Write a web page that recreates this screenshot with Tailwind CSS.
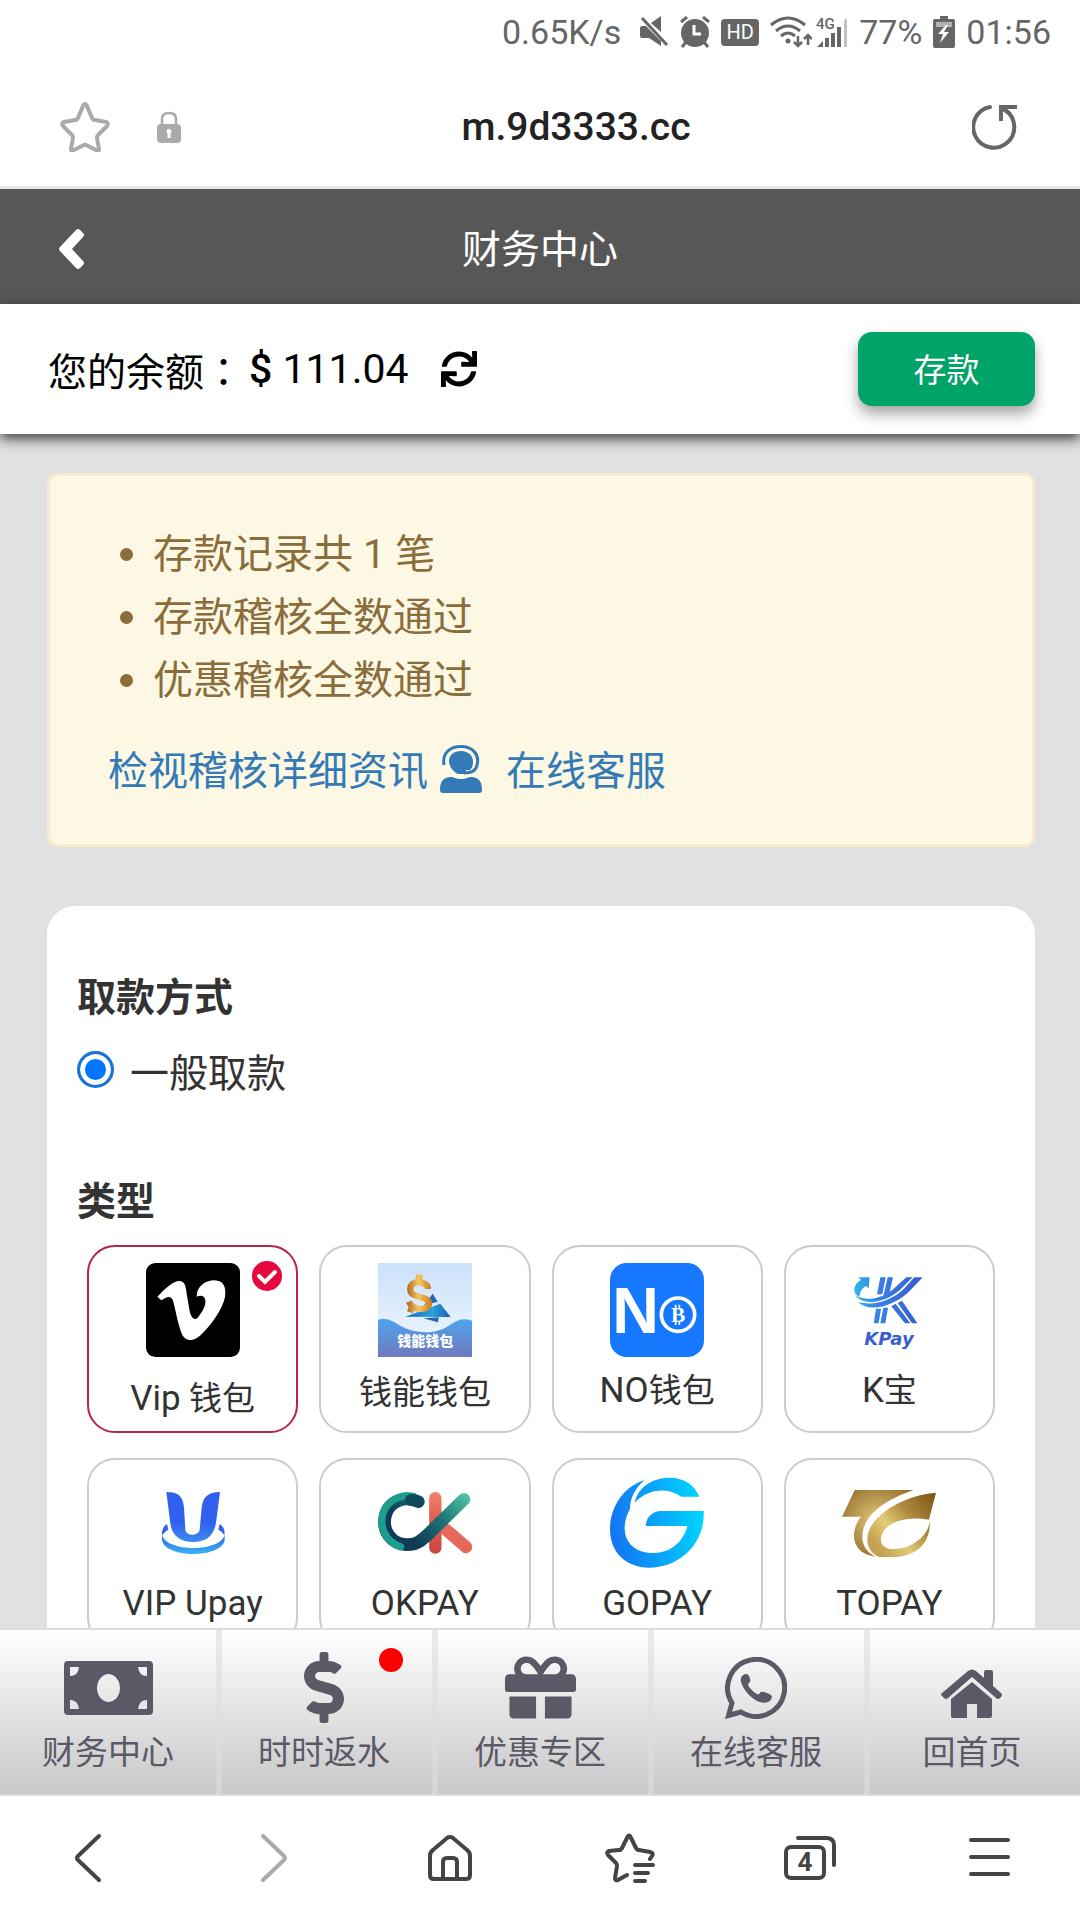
<!DOCTYPE html>
<html lang="zh-CN">
<head>
  <meta charset="UTF-8" />
  <meta name="viewport" content="width=device-width, initial-scale=1.0" />
  <title>财务中心</title>
  <script src="https://cdn.jsdelivr.net/npm/@tailwindcss/browser@4"></script>
</head>
<body class="h-screen flex flex-col overflow-hidden bg-white text-[#333] font-[Roboto,'Noto_Sans_CJK_SC',sans-serif]">

  <!-- Phone status bar -->
  <div class="h-16 shrink-0 flex items-center justify-end gap-[11px] pr-[29px] text-[34px] leading-none text-[#666]">
    <span class="mr-2">0.65K/s</span>
    <svg class="w-[29px] h-8" viewBox="0 0 29 32" fill="currentColor"><path d="M0 12q0-2 2-2h4l15 15v5L9 22H2q-2 0-2-2zM11 7l10-7v16z"/><path d="M2 2l25 27" stroke="currentColor" stroke-width="3"/></svg>
    <svg class="w-[30px] h-8" viewBox="0 0 30 32"><circle cx="15" cy="17" r="14" fill="currentColor"/><path d="M1 6l6-5M29 6l-6-5M6 26l-4 5M24 26l4 5" stroke="currentColor" stroke-width="3"/><path d="M14 9v9h7" fill="none" stroke="#fff" stroke-width="3"/></svg>
    <span class="w-[38px] h-[27px] rounded-sm bg-[#666] text-white text-[20px] leading-[27px] text-center">HD</span>
    <div class="flex items-center gap-1">
      <svg class="w-[42px] h-8" viewBox="0 0 42 32" fill="none" stroke="currentColor" stroke-width="3"><path d="M1 9Q18-5 35 9M6 15q12-10 24 0M11 20q7-6 14 0"/><circle cx="18" cy="25" r="2.500" fill="currentColor" stroke="none"/><path d="M28 20v10M24 26l4 4 4-4M38 29V19M34 23l4-4 4 4" stroke-width="2.500"/></svg>
      <svg class="w-8 h-8" viewBox="0 0 32 32" fill="currentColor"><text x="0" y="13" font-size="15" font-weight="500">4G</text><path d="M1 31l6-6v6zM9 22h4v9H9zM15 17h4v14h-4zM21 11h4v20h-4z"/><path d="M28 4l3-2v29h-3z" opacity=".4"/></svg>
    </div>
    <span>77%</span>
    <svg class="w-[22px] h-8" viewBox="0 0 22 32"><path d="M7 0h8v3h5q2 0 2 2v25q0 2-2 2H2q-2 0-2-2V5q0-2 2-2h5z" fill="currentColor"/><path d="M3 6h16v5H3z" fill="#fff" opacity=".5"/><path d="M13 9l-8 9h5l-3 9 9-11h-5l4-7z" fill="#fff"/></svg>
    <span>01:56</span>
  </div>

  <!-- Address bar -->
  <div class="h-[125px] shrink-0 flex items-center justify-between pt-1 pl-[60px] pr-[62px] border-b-[3px] border-[#e5e5e5]">
    <div class="flex items-center gap-[47px] w-[120px]">
      <button aria-label="收藏"><svg class="block w-[50px] h-[50px]" viewBox="0 0 50 50" fill="none" stroke="#aaa" stroke-width="4" stroke-linejoin="round"><path d="M23 4q2-4 4 0l5 12q1 2 3 2l11 2q3 1 1 4l-9 9q-1 1-1 3l2 11q0 3-3 1l-10-5q-1-1-2 0l-10 5q-3 2-3-1l2-11q0-2-1-3L3 24q-2-3 1-4l11-2q2 0 3-2z"/></svg></button>
      <svg class="w-6 h-8 shrink-0" viewBox="0 0 24 32"><path d="M5 15V8q0-6 7-6t7 6v7" fill="none" stroke="#aaa" stroke-width="2.500"/><rect y="13" width="24" height="19" rx="4" fill="#aaa"/><path d="M12 18a2.500 2.500 0 0 1 1.500 4.500V27h-3v-4.500A2.500 2.500 0 0 1 12 18z" fill="#fff"/></svg>
    </div>
    <span class="text-[39px] leading-none font-medium text-[#222] pl-[74px]">m.9d3333.cc</span>
    <div class="flex justify-end w-[120px]">
      <button aria-label="刷新"><svg class="block w-[46px] h-[46px]" viewBox="0 0 46 46" fill="none" stroke="#666" stroke-width="4"><path d="M18 3a20.500 20.500 0 1 0 15 3" stroke-linecap="round"/><path d="M45 3H29v14M29 3l8 6"/></svg></button>
    </div>
  </div>

  <!-- Page header -->
  <header class="h-[115px] shrink-0 grid grid-cols-3 items-center pt-1 px-[58px] bg-[#575757] text-white">
    <a href="#" aria-label="返回" class="justify-self-start"><svg class="block w-7 h-10" viewBox="0 0 28 40" fill="currentColor"><path d="M18 1q2-2 4 0l3 3q2 2 0 4L14 20l11 12q2 2 0 4l-3 3q-2 2-4 0L2 22q-2-2 0-4z"/></svg></a>
    <h1 class="pt-1 text-[39px] leading-none text-center whitespace-nowrap">财务中心</h1>
  </header>

  <!-- Balance -->
  <div class="relative z-10 h-[130px] shrink-0 flex items-center justify-between pl-12 pr-[45px] bg-white text-black shadow-[0_5px_12px_rgba(0,0,0,0.7)]">
    <div class="flex items-center text-[39px] leading-[60px]">
      <span class="pt-1">您的余额<span lang="zh-TW" class="font-['Noto_Sans_CJK_TC',sans-serif]">：</span></span>
      <span class="ml-1.5 text-[41px]"><span class="font-medium">$</span> 111.04</span>
      <button aria-label="更新余额" class="ml-8"><svg class="block w-9 h-9" viewBox="0 0 512 512" fill="currentColor"><path d="M440.650 12.570l4 82.770A247.160 247.160 0 0 0 255.830 8C134.730 8 33.910 94.920 12.290 209.820A12 12 0 0 0 24.090 224h49.050a12 12 0 0 0 11.670-9.260 175.910 175.910 0 0 1 317-56.940l-101.460-4.860a12 12 0 0 0-12.570 12v47.410a12 12 0 0 0 12 12H500a12 12 0 0 0 12-12V12a12 12 0 0 0-12-12h-47.370a12 12 0 0 0-11.980 12.570zM255.830 432a175.610 175.610 0 0 1-146-77.800l101.800 4.870a12 12 0 0 0 12.570-12v-47.400a12 12 0 0 0-12-12H12a12 12 0 0 0-12 12V500a12 12 0 0 0 12 12h47.350a12 12 0 0 0 12-12.600l-4.150-82.570A247.170 247.170 0 0 0 255.830 504c121.110 0 221.930-86.920 243.550-201.820a12 12 0 0 0-11.800-14.180h-49.050a12 12 0 0 0-11.670 9.260A175.860 175.860 0 0 1 255.830 432z"/></svg></button>
    </div>
    <button class="w-[177px] h-[74px] pt-0.5 rounded-[14px] bg-[#00a368] text-white text-[33px] leading-none shadow-[0_8px_14px_rgba(0,0,0,0.35)]">存款</button>
  </div>

  <main class="flex-1 min-h-0 overflow-hidden bg-[#e1e1e1] pl-[47px] pr-[45px] pt-[39px]">
    <section class="rounded-[10px] border-[3px] border-[#faebcc] bg-[#fcf8e3] px-[58px] pt-[47px] pb-[41px] text-[40px] leading-[63px] text-[#8a6d3b]">
      <ul>
        <li class="flex items-center gap-5 pl-3"><i class="w-[13px] h-[13px] rounded-full bg-[#8a6d3b]"></i>存款记录共 1 笔</li>
        <li class="flex items-center gap-5 pl-3"><i class="w-[13px] h-[13px] rounded-full bg-[#8a6d3b]"></i>存款稽核全数通过</li>
        <li class="flex items-center gap-5 pl-3"><i class="w-[13px] h-[13px] rounded-full bg-[#8a6d3b]"></i>优惠稽核全数通过</li>
      </ul>
      <div class="flex items-center mt-7 text-[#337ab7]">
        <a href="#">检视稽核详细资讯</a>
        <a href="#" class="flex items-center ml-3">
          <svg class="w-[42px] h-12 mr-6 mb-1.5" viewBox="0 0 42 48" fill="currentColor"><path d="M21 6c8 0 12 5 12 11 0 4-1 6-3 8h-9q-4 0-5 3c-4-3-7-7-7-12C9 10 14 6 21 6z"/><path d="M4 20C2 8 10 1.500 21 1.500S40 9 37 20c-1 6-6 8-13 8" fill="none" stroke="currentColor" stroke-width="3"/><rect x="16" y="24" width="10" height="5" rx="2.500"/><path d="M0 45c0-8 3-13 11-13 3 0 4 2 10 2s7-2 10-2c8 0 11 5 11 13q0 3-3 3H3q-3 0-3-3z"/></svg>
          在线客服
        </a>
      </div>
    </section>

    <section class="mt-[59px] rounded-t-[28px] bg-white px-[30px] pt-16 pb-10">
      <h2 class="text-[39px] leading-[56px] font-bold">取款方式</h2>
      <label class="mt-5 flex items-center gap-4 text-[39px] leading-[56px]">
        <input type="radio" name="method" checked class="appearance-none shrink-0 w-[37px] h-[37px] mb-2.5 rounded-full border-[3px] border-[#1a73d9] bg-[#0075ff] shadow-[inset_0_0_0_5px_#fff]">
        一般取款
      </label>
      <h2 class="mt-[72px] text-[39px] leading-[56px] font-bold">类型</h2>

      <div class="mt-[15px] px-2.5 grid grid-cols-4 gap-x-[21px] gap-y-[25px] text-[33px] leading-[48px] text-center">
        <label class="relative h-[188px] rounded-[28px] border-2 border-[#b5254c] pt-4 flex flex-col items-center">
          <input type="radio" name="wallet" checked class="sr-only">
          <svg class="w-[94px] h-[94px]" viewBox="228 98 282 282"><rect x="228" y="98" width="282" height="282" rx="28"/><path d="M262 199C290 170 312 150 330 152c15 2 18 18 20 38l9 53c5 22 16 28 24 19 14-16 25-36 23-52-2-14-14-16-26-11 0-30 25-49 53-49 28 1 36 20 32 50-7 36-43 88-75 116-20 17-40 17-52 0-16-35-20-78-30-108-8-13-19-8-34 2z" fill="#fff"/></svg>
          <svg class="absolute right-3.5 top-3.5 w-[30px] h-[30px]" viewBox="0 0 30 30"><circle cx="15" cy="15" r="15" fill="#e6073f"/><path d="M7 15l6 6L23 11" fill="none" stroke="#fff" stroke-width="4" stroke-linecap="round"/></svg>
          <span class="mt-[18px]"><span class="text-[35px]">Vip</span> 钱包</span>
        </label>

        <label class="h-[188px] rounded-[28px] border-2 border-[#ccc] pt-4 flex flex-col items-center">
          <input type="radio" name="wallet" class="sr-only">
          <svg class="w-[94px] h-[94px]" viewBox="924 98 282 282">
            <defs>
              <linearGradient id="sky" x2="0" y2="1"><stop stop-color="#cbe1fb"/><stop offset="1" stop-color="#f1f8ff"/></linearGradient>
              <linearGradient id="sea" x2="0" y2="1"><stop stop-color="#4fa4ee"/><stop offset="1" stop-color="#7079bd"/></linearGradient>
              <linearGradient id="coin" gradientUnits="userSpaceOnUse" x1="1006" y1="0" x2="1086" y2="0"><stop stop-color="#a65c14"/><stop offset=".5" stop-color="#f8c664"/><stop offset="1" stop-color="#c9791c"/></linearGradient>
              <linearGradient id="sail"><stop stop-color="#0d6fc0"/><stop offset=".6" stop-color="#28a2d8"/><stop offset="1" stop-color="#1d5bb0"/></linearGradient>
            </defs>
            <path d="M924 98h282v282H924z" fill="url(#sky)"/>
            <path d="M924 268q25-8 50 8c50 35 120 43 170 5 22-15 40-18 62-10v109H924z" fill="url(#sea)"/>
            <path d="M1062 225l26-35 15 24zM1060 264l46-3-2 15z" fill="#2464b4"/>
            <path d="M1006 259l105-39 31 40z" fill="url(#sail)"/>
            <path d="M1074 176c0-24-54-32-53 2 0 28 57 16 56 42-2 22-50 22-60-6M1049 132l-3 16M1028 226l-8 20" fill="none" stroke="url(#coin)" stroke-width="19"/>
            <text x="1066" y="347" font-size="42" font-weight="900" text-anchor="middle" fill="#fff">钱能钱包</text>
          </svg>
          <span class="mt-3">钱能钱包</span>
        </label>

        <label class="h-[188px] rounded-[28px] border-2 border-[#ccc] pt-4 flex flex-col items-center">
          <input type="radio" name="wallet" class="sr-only">
          <svg class="w-[94px] h-[94px]" viewBox="210 98 282 282"><rect x="210" y="98" width="282" height="282" rx="50" fill="#1677ff"/><text x="217" y="309" font-size="194" font-weight="700" fill="#fff" font-family="Liberation Sans">N</text><circle cx="414" cy="253" r="50" fill="#1677ff" stroke="#fff" stroke-width="11"/><text x="414" y="276" font-size="64" font-weight="700" text-anchor="middle" fill="#fff" font-family="Liberation Serif">B</text><path d="M407 223v10M418 223v10M407 274v10M418 274v10" stroke="#fff" stroke-width="5"/></svg>
          <span class="mt-2.5"><span class="text-[35px]">NO</span>钱包</span>
        </label>

        <label class="h-[188px] rounded-[28px] border-2 border-[#ccc] pt-4 flex flex-col items-center">
          <input type="radio" name="wallet" class="sr-only">
          <svg class="w-[94px] h-[94px]" viewBox="906 98 282 282">
            <defs><linearGradient id="kp" gradientUnits="userSpaceOnUse" x1="944" y1="0" x2="1148" y2="0"><stop stop-color="#2cb4ea"/><stop offset=".35" stop-color="#3a80e6"/><stop offset="1" stop-color="#345bd2"/></linearGradient></defs>
            <g fill="url(#kp)">
              <path d="M956 141h33l-3 33-8-7q-17 8-20 32-16-7-15-24 2-16 20-26z"/>
              <path d="M1021 141h16l-10 51h-16zM1043 141h16l-11 48-18 8zM1008 235h15l-7 44h-15zM1030 232h14l-8 47h-15zM1054 228l13-8 44 59h-16zM1073 218l13-7 46 68h-16z"/>
              <path d="M944 195c35 19 82 11 117-20l38-34h19l-36 36c-48 43-110 50-138 18z"/>
              <path d="M954 216c57 12 107-10 140-43l29-32h25l-39 41c-48 46-119 66-155 34z"/>
            </g>
            <text x="1047" y="345" font-size="54" font-weight="700" font-style="italic" text-anchor="middle" fill="#3b5fd0" font-family="DejaVu Sans">KPay</text>
          </svg>
          <span class="mt-2.5"><span class="text-[35px]">K</span>宝</span>
        </label>

        <label class="h-[188px] rounded-[28px] border-2 border-[#ccc] pt-4 flex flex-col items-center">
          <input type="radio" name="wallet" class="sr-only">
          <svg class="w-[94px] h-[94px]" viewBox="228 108 282 282">
            <defs><linearGradient id="up" x2="0" y2="1"><stop offset=".6" stop-color="#2f60ee"/><stop offset="1" stop-color="#3a8bf2"/></linearGradient><linearGradient id="ring" x2="0" y2="1"><stop stop-color="#2f60ee"/><stop offset="1" stop-color="#38b5f2"/></linearGradient></defs>
            <path d="M291 252c-12 8-17 20-14 34 3-6 9-12 18-17zM449 252c12 8 17 20 14 34-3-6-9-12-18-17z" fill="#2f60ee"/>
            <path d="M276 283c8 55 180 55 188 0v17c-9 56-179 56-188 0z" fill="url(#ring)"/>
            <path d="M289 156c37 0 50 13 53 47l4 66c2 20 40 20 43 0l6-66c4-32 18-46 55-47l-12 92c-6 38-28 58-68 58-39 0-64-18-69-56z" fill="url(#up)"/>
          </svg>
          <span class="mt-2.5 text-[35px]">VIP Upay</span>
        </label>

        <label class="h-[188px] rounded-[28px] border-2 border-[#ccc] pt-4 flex flex-col items-center">
          <input type="radio" name="wallet" class="sr-only">
          <svg class="w-[94px] h-[94px]" viewBox="924 108 282 282" fill="none" stroke-linecap="round">
            <defs>
              <linearGradient id="okc" gradientUnits="userSpaceOnUse" x1="1040" y1="310" x2="1195" y2="165"><stop stop-color="#0e3c56"/><stop offset=".5" stop-color="#1f7378"/><stop offset="1" stop-color="#52c6a2"/></linearGradient>
              <linearGradient id="okr" gradientUnits="userSpaceOnUse" x1="1096" y1="160" x2="1096" y2="340"><stop stop-color="#f0806a"/><stop offset=".4" stop-color="#e2604f"/><stop offset="1" stop-color="#cb4640"/></linearGradient>
            </defs>
            <path d="M1096 174.500L1096.010 323" stroke="url(#okr)" stroke-width="37"/>
            <path d="M1128 269l60 52" stroke="#e5695a" stroke-width="37"/>
            <path d="M1045 185c-39-20-87-2-98 39-14 48 18 88 63 90 30 1 43-12 63-30L1182 178" stroke="url(#okc)" stroke-width="38"/>
            <path d="M1030 169c-48-7-84 19-93 58-8 42 15 80 55 93" stroke="#1b9f8c" stroke-width="22"/>
            <path d="M1045 185q-12-5-22-5" stroke="#0f4a5c" stroke-width="36"/>
          </svg>
          <span class="mt-2.5 text-[35px]">OKPAY</span>
        </label>

        <label class="h-[188px] rounded-[28px] border-2 border-[#ccc] pt-4 flex flex-col items-center">
          <input type="radio" name="wallet" class="sr-only">
          <svg class="w-[94px] h-[94px]" viewBox="210 108 282 282">
            <defs><linearGradient id="go" gradientUnits="userSpaceOnUse" x1="210" y1="260" x2="480" y2="220"><stop stop-color="#1474f2"/><stop offset="1" stop-color="#00d2ff"/></linearGradient></defs>
            <g fill="url(#go)"><path d="M314 120c-62 19-104 80-104 148 0 69 48 115 117 115 94 0 169-74 164-170H360c-24 3-41 18-43 45h125c-12 47-49 81-103 81-53 0-87-32-85-79 1-20 7-37 16-53 0-34 16-63 44-87z"/><path d="M284 188c10-46 52-74 103-75 45-1 77 23 91 57h-54c-45-31-103-21-140 18z"/></g>
          </svg>
          <span class="mt-2.5 text-[35px]">GOPAY</span>
        </label>

        <label class="h-[188px] rounded-[28px] border-2 border-[#ccc] pt-4 flex flex-col items-center">
          <input type="radio" name="wallet" class="sr-only">
          <svg class="w-[94px] h-[94px]" viewBox="906 108 282 282">
            <defs>
              <radialGradient id="gold1" cx=".5" cy=".45" r=".6"><stop stop-color="#e2cb78"/><stop offset="1" stop-color="#977030"/></radialGradient>
              <linearGradient id="gold2" x1=".1" y1=".8" x2="1" y2=".1"><stop stop-color="#c4a150"/><stop offset=".3" stop-color="#e2cb78"/><stop offset=".6" stop-color="#b08a3e"/><stop offset="1" stop-color="#805918"/></linearGradient>
            </defs>
            <path d="M944 150h177c-95 32-154 82-154 140 0 26 13 45 38 60-46-7-64-34-63-66 1-20 9-38 20-54h-56z" fill="url(#gold1)"/>
            <path d="M1188 158c-95 7-204 69-206 138 0 29 13 45 36 55h47c68-4 106-43 105-107-8 48-56 82-108 83-27 0-42-12-39-34 6-39 62-67 144-54z" fill="url(#gold2)"/>
          </svg>
          <span class="mt-2.5 text-[35px]">TOPAY</span>
        </label>
      </div>
    </section>
  </main>

  <!-- Site tab bar -->
  <nav class="shrink-0 grid grid-cols-5 border-y-2 border-[#dcdcdc] bg-linear-to-b from-white to-[#c8c8ca] text-[#5b5966] text-[33px] leading-[48px] text-center">
    <a href="#" class="pt-[22px] pb-[17px]">
      <span class="h-[71px] flex items-center justify-center"><svg class="w-[89px] h-[54px]" viewBox="0 0 89 54" fill="currentColor"><path fill-rule="evenodd" d="M4 0h81q4 0 4 4v46q0 4-4 4H4q-4 0-4-4V4q0-4 4-4zM6 6v9q8 0 9-9zM83 6h-9q1 9 9 9zM6 48h9q-1-9-9-9zM83 48v-9q-8 0-9 9zM44.500 13a11.500 14 0 1 0 .010 0z"/></svg></span>
      <span class="block mt-1.5">财务中心</span>
    </a>
    <a href="#" class="relative pt-[22px] pb-[17px] pr-1.5 border-l-[6px] border-[#dedede]/60">
      <span class="h-[71px] flex items-center justify-center"><svg class="w-10 h-[71px]" viewBox="0 0 288 512" fill="currentColor"><path d="M209.200 233.400l-108-31.600C88.700 198.200 80 186.500 80 173.500c0-16.300 13.200-29.500 29.500-29.500h66.300c12.200 0 24.200 3.700 34.200 10.500 6.100 4.100 14.300 3.100 19.500-2l34.800-34c7.100-6.900 6.100-18.400-1.800-24.500C238 74.800 207.400 64.100 176 64V16c0-8.800-7.200-16-16-16h-32c-8.800 0-16 7.200-16 16v48h-2.500C45.800 64-5.400 118.700.5 183.600c4.200 46.100 39.400 83.600 83.800 96.600l102.500 30c12.500 3.700 21.200 15.300 21.200 28.300 0 16.300-13.200 29.500-29.500 29.500h-66.300C100 368 88 364.300 78 357.500c-6.100-4.100-14.300-3.100-19.500 2l-34.800 34c-7.100 6.900-6.100 18.400 1.800 24.500 24.500 19.200 55.100 29.900 86.500 30v48c0 8.800 7.200 16 16 16h32c8.800 0 16-7.200 16-16v-48.200c46.600-.9 90.300-28.600 105.700-72.700 21.500-61.600-14.600-124.800-72.500-141.700z"/></svg></span>
      <span class="block mt-1.5">时时返水</span>
      <i class="absolute right-[29px] top-[18px] w-6 h-6 rounded-full bg-[#ff0000]"></i>
    </a>
    <a href="#" class="pt-[22px] pb-[17px] pr-1.5 border-l-[6px] border-[#dedede]/60">
      <span class="h-[71px] flex items-center justify-center"><svg class="w-[71px] h-[71px]" viewBox="0 0 512 512" fill="currentColor"><path d="M32 448c0 17.700 14.300 32 32 32h160V320H32v128zm256 32h160c17.700 0 32-14.300 32-32V320H288v160zm192-320h-42.100c6.200-12.100 10.100-25.500 10.100-40 0-48.500-39.500-88-88-88-41.600 0-68.500 21.300-103 68.300-34.500-47-61.400-68.300-103-68.300-48.500 0-88 39.500-88 88 0 14.500 3.800 27.900 10.100 40H32c-17.700 0-32 14.300-32 32v80c0 8.800 7.200 16 16 16h480c8.800 0 16-7.200 16-16v-80c0-17.700-14.300-32-32-32zm-326.100 0c-22.100 0-40-17.900-40-40s17.900-40 40-40c19.900 0 34.600 3.300 86.100 80h-86.100zm206.100 0h-86.100c51.400-76.500 65.700-80 86.100-80 22.100 0 40 17.900 40 40s-17.900 40-40 40z"/></svg></span>
      <span class="block mt-1.5">优惠专区</span>
    </a>
    <a href="#" class="pt-[22px] pb-[17px] pr-1.5 border-l-[6px] border-[#dedede]/60">
      <span class="h-[71px] flex items-center justify-center"><svg class="w-[62px] h-[62px]" viewBox="0 0 62 62"><path d="M7 46A28.500 28.500 0 1 1 16 55L3.500 58.500z" fill="none" stroke="currentColor" stroke-width="5"/><path d="M21 17q3 0 4 5 1 3-1 4-2 2 1 5 3 4 7 6 2 1 3-1 1-2 4-1 5 1 8 4 0 4-4 6-5 2-11-1-9-5-14-14-4-7-1-11 2-2 4-2z" fill="currentColor"/></svg></span>
      <span class="block mt-1.5">在线客服</span>
    </a>
    <a href="#" class="pt-[22px] pb-[17px] pr-1.5 border-l-[6px] border-[#dedede]/60">
      <span class="h-[71px] flex items-center justify-center"><svg class="w-[62px] h-[62px]" viewBox="0 0 62 62" fill="currentColor"><path d="M31 25l20 17v17q0 2-2 2H36V47H26v14H12q-2 0-2-2V42z"/><path d="M27 14q4-3 8 0l8 7v-6q0-2 2-2h5q2 0 2 2v14l8 7q2 2 0 4l-1 1q-2 2-4 0L31 20 7 41q-2 2-4 0l-2-2q-2-2 0-3z"/></svg></span>
      <span class="block mt-1.5">回首页</span>
    </a>
  </nav>

  <!-- Browser toolbar -->
  <div class="h-[124px] shrink-0 grid grid-cols-6 items-center justify-items-center bg-white text-[#444]">
    <button aria-label="后退"><svg class="block w-[50px] h-[50px]" viewBox="0 0 50 50" fill="none" stroke="currentColor" stroke-width="4" stroke-linecap="round"><path d="M34 3L13 23q-2 2 0 4l21 20"/></svg></button>
    <button aria-label="前进"><svg class="block w-[50px] h-[50px]" viewBox="0 0 50 50" fill="none" stroke="#aaa" stroke-width="4" stroke-linecap="round"><path d="M18 3l21 20q2 2 0 4L18 47"/></svg></button>
    <button aria-label="主页"><svg class="block w-[50px] h-[50px]" viewBox="0 0 50 50" fill="none" stroke="currentColor" stroke-width="4"><path d="M5 23q0-4 3-6L22 5q3-2 6 0l14 12q3 2 3 6v19q0 4-4 4H9q-4 0-4-4zM18 46V29q0-4 4-4h6q4 0 4 4v17"/></svg></button>
    <button aria-label="书签"><svg class="block w-[50px] h-[50px]" viewBox="0 0 50 50" fill="none" stroke="currentColor" stroke-width="4" stroke-linecap="round" stroke-linejoin="round"><path d="M22 42l-9 5q-3 1-3-2l2-12q0-2-1-3l-8-8q-2-3 1-4l10-1q2 0 3-2l5-10q2-5 4 0l5 10q1 2 3 2l11 2q4 1 2 4l-2 3M30 32h18M30 40h13M30 48h10"/></svg></button>
    <button aria-label="标签页"><svg class="block w-[54px] h-[50px]" viewBox="0 0 54 50" fill="none" stroke="currentColor" stroke-width="4" stroke-linecap="round"><rect x="3" y="14" width="38" height="31" rx="5"/><path d="M15 5h28q8 0 8 7v20"/><text x="22" y="38" font-size="26" font-weight="700" text-anchor="middle" fill="currentColor" stroke="none">4</text></svg></button>
    <button aria-label="菜单"><svg class="block w-[50px] h-[50px]" viewBox="0 0 50 50" fill="none" stroke="currentColor" stroke-width="4" stroke-linecap="round"><path d="M6 7h37M6 24h37M6 41h37"/></svg></button>
  </div>
</body>
</html>
